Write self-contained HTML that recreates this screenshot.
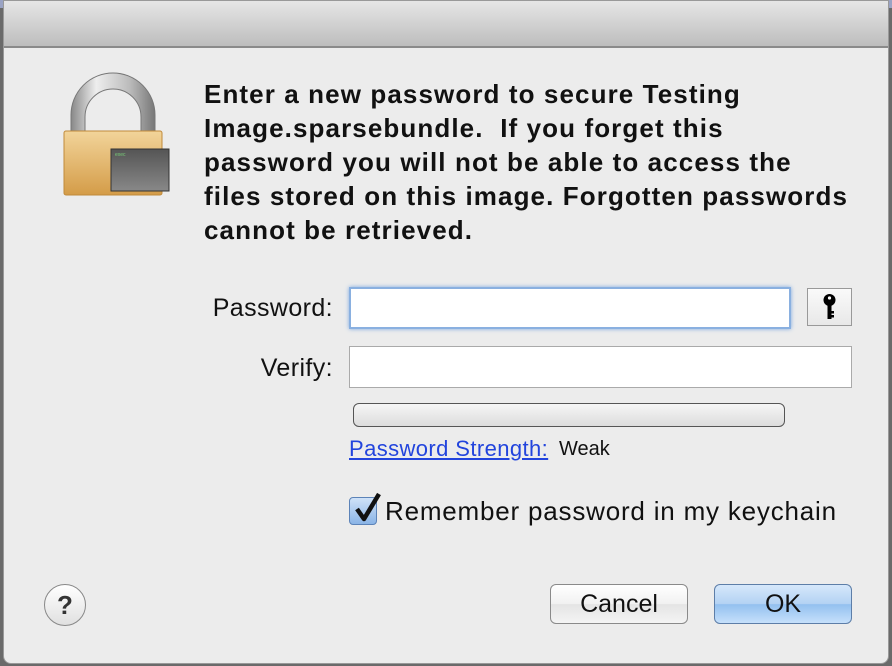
<!DOCTYPE html><html><head><style>
body{margin:0;width:892px;height:666px;background:#6a6a6a;position:relative;overflow:hidden;font-family:"Liberation Sans",sans-serif}
.dlg{position:absolute;left:3px;top:0;width:886px;height:664px;background:#ececec;border-radius:0 0 8px 8px;border:1px solid #999;box-sizing:border-box;overflow:hidden}
.tb{position:absolute;left:0;top:0;right:0;height:45px;background:linear-gradient(#e6e6e6,#bdbdbd);border-bottom:2px solid #8a8a8a}
.a{position:absolute}
.msg{left:200px;top:76px;font-weight:bold;font-size:26px;line-height:34px;color:#111;white-space:nowrap;letter-spacing:1.1px}
.lbl{font-size:25px;color:#111;text-align:right;width:200px;letter-spacing:.4px}
.fld{background:#fff;border:1px solid #aaa;box-sizing:border-box}
.btn{border:1px solid #8a8a8a;border-radius:6px;box-sizing:border-box;font-size:25px;text-align:center;line-height:38px;color:#111;background:linear-gradient(#fff,#f1f1f1 50%,#e4e4e4 51%,#f4f4f4)}
</style></head><body>
<div class="a" style="left:0;top:0;width:892px;height:8px;background:#9aa3c4"></div>
<div class="dlg">
<div class="tb"></div>
<svg class="a" style="left:52px;top:70px" width="120" height="130" viewBox="0 0 120 130">
<defs><linearGradient id="s" x1="0" x2="1"><stop offset="0" stop-color="#888"/><stop offset=".3" stop-color="#eee"/><stop offset=".7" stop-color="#bbb"/><stop offset="1" stop-color="#777"/></linearGradient>
<linearGradient id="g" x1="0" y1="0" x2="0" y2="1"><stop offset="0" stop-color="#f2d49a"/><stop offset="1" stop-color="#d49c48"/></linearGradient>
<linearGradient id="e" x1="0" y1="0" x2="0" y2="1"><stop offset="0" stop-color="#555"/><stop offset="1" stop-color="#888"/></linearGradient></defs>
<path d="M15 62 V44 A42 42 0 0 1 99 44 V62 H85 V46 A28 28 0 0 0 29 46 V62 Z" fill="url(#s)" stroke="#777"/>
<rect x="8" y="60" width="98" height="64" rx="2" fill="url(#g)" stroke="#c08a3a"/>
<rect x="55" y="78" width="58" height="42" fill="url(#e)" stroke="#333"/>
<text x="59" y="85" font-size="5" fill="#7c7">exec</text>
</svg>
<div class="a msg">Enter a new password to secure Testing<br>Image.sparsebundle.&nbsp; If you forget this<br>password you will not be able to access the<br>files stored on this image. Forgotten passwords<br>cannot be retrieved.</div>
<div class="a lbl" style="left:129px;top:293px">Password:</div>
<div class="a fld" style="left:345px;top:286px;width:442px;height:42px;border:2px solid #8ab0e0;box-shadow:0 0 4px #7aa7e0"></div>
<div class="a" style="left:803px;top:287px;width:45px;height:38px;border:1px solid #999;box-sizing:border-box;background:linear-gradient(#fafafa,#e8e8e8)">
<svg width="43" height="36"><circle cx="21.5" cy="11" r="6" fill="#000"/><circle cx="21.5" cy="9" r="1.6" fill="#fff"/><rect x="19.5" y="15" width="4" height="15" fill="#000"/><rect x="23" y="22" width="3" height="2.5" fill="#000"/><rect x="23" y="26" width="3" height="2.5" fill="#000"/></svg></div>
<div class="a lbl" style="left:129px;top:353px">Verify:</div>
<div class="a fld" style="left:345px;top:345px;width:503px;height:42px"></div>
<div class="a" style="left:349px;top:402px;width:432px;height:24px;border:1px solid #555;border-radius:6px;box-sizing:border-box;background:linear-gradient(#f6f6f6,#dcdcdc)"></div>
<div class="a" style="left:345px;top:435px;font-size:22px;color:#2244dd;text-decoration:underline;letter-spacing:.4px">Password Strength:</div>
<div class="a" style="left:555px;top:437px;font-size:20px;color:#111">Weak</div>
<div class="a" style="left:345px;top:496px;width:28px;height:28px;border-radius:4px;border:1px solid #5c83b8;box-sizing:border-box;background:linear-gradient(#cfe2f8,#8ab4e6)"></div>
<svg class="a" style="left:349px;top:490px" width="30" height="34"><path d="M4 18 L11 28 L26 3" fill="none" stroke="#111" stroke-width="4.5" stroke-linejoin="round"/></svg>
<div class="a" style="left:381px;top:495px;font-size:26px;color:#111;letter-spacing:.8px">Remember password in my keychain</div>
<div class="a" style="left:40px;top:583px;width:42px;height:42px;border-radius:50%;border:1px solid #888;box-sizing:border-box;background:linear-gradient(#fff,#e0e0e0);text-align:center;font-size:26px;font-weight:bold;line-height:40px;color:#333">?</div>
<div class="a btn" style="left:546px;top:583px;width:138px;height:40px">Cancel</div>
<div class="a btn" style="left:710px;top:583px;width:138px;height:40px;border-color:#5d7ea8;background:linear-gradient(#d6e8fb,#b3d2f3 50%,#93c0ef 51%,#c6e0fb)">OK</div>
</div>
</body></html>
